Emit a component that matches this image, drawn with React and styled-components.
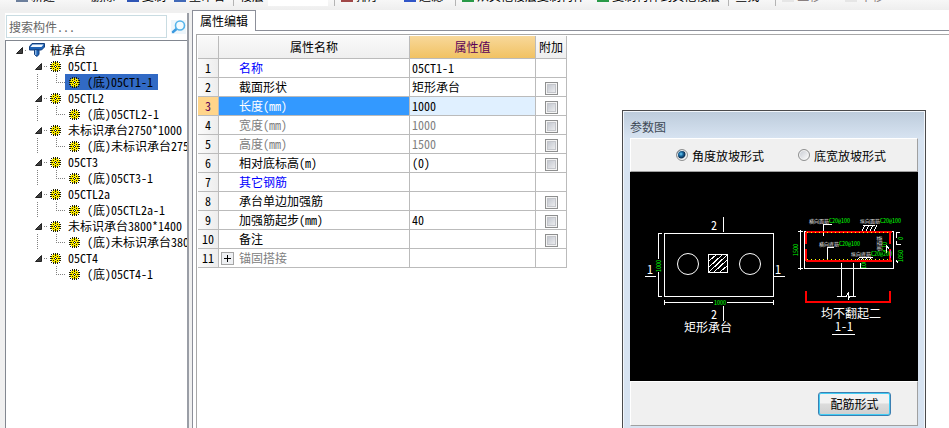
import React, { useState } from 'react';
import styled, { createGlobalStyle, css } from 'styled-components';

const GlobalStyle = createGlobalStyle`
  * {
    box-sizing: border-box;
  }
  body {
    margin: 0;
    overflow: hidden;
    background: #fff;
  }
  body, button, input, select {
    font-family: 'Noto Sans CJK SC', 'Liberation Sans', sans-serif;
    font-size: 12px;
    font-feature-settings: 'hwid';
    color: #000;
  }
`;

const Window = styled.div`
  display: flex;
  flex-direction: column;
  height: 100vh;
  overflow: hidden;
`;

/* toolbar */

const Toolbar = styled.div`
  flex: none;
  display: flex;
  align-items: flex-end;
  height: 10px;
  padding: 0 16px 4px;
  overflow: hidden;
  background: linear-gradient(#f7f7f7, #eee);
`;

const ToolButton = styled.button`
  flex: none;
  display: flex;
  align-items: center;
  gap: 3px;
  height: 20px;
  margin-right: ${(p) => p.$gap || 8}px;
  padding: 0;
  border: 0;
  background: none;
  line-height: 20px;
  white-space: nowrap;
  color: ${(p) => (p.disabled ? '#8a8080' : '#000')};
`;

const ToolIcon = styled.span`
  width: 12px;
  height: 12px;
  border: 2px solid ${(p) => p.$color};
  background: #dfe8f5;
`;

const ToolSelect = styled.select`
  flex: none;
  width: 60px;
  height: 20px;
  margin: 0 6px 0 0;
  border: 0;
  background: #fff;
`;

const Separator = styled.span`
  flex: none;
  width: 1px;
  height: 20px;
  margin-right: 6px;
  background: #b4b4b4;
`;

const Workspace = styled.div`
  flex: 1;
  display: flex;
  min-height: 0;
  background: #f0f0f0;
`;

/* component tree */

const Sidebar = styled.aside`
  flex: none;
  display: flex;
  flex-direction: column;
  width: 184px;
  margin: 3px 3px 0 5px;
  border-right: 2px solid #9a9ea6;
  background: #fff;
`;

const SearchBar = styled.div`
  display: flex;
  align-items: center;
  gap: 4px;
  height: 27px;
  padding: 0 1px;
`;

const SearchInput = styled.input`
  flex: 1;
  min-width: 0;
  height: 23px;
  padding: 0 2px;
  border: 1px solid #c9dce2;
  outline: 0;
  &::placeholder {
    color: #666;
  }
`;

const SearchButton = styled.button`
  flex: none;
  display: flex;
  padding: 0;
  border: 0;
  background: #eef6fb;
`;

const Tree = styled.div`
  flex: 1;
  padding-top: 1px;
  border-top: 1px solid #828790;
  border-left: 1px solid #828790;
  overflow: hidden;
`;

const TreeRow = styled.div`
  display: flex;
  align-items: center;
  height: 16px;
  padding-left: ${(p) => p.$indent}px;
`;

const Dots = styled.span`
  flex: none;
  width: ${(p) => p.$width}px;
  height: 1px;
  margin: 0 2px;
  background: repeating-linear-gradient(90deg, #808080 0 1px, transparent 1px 2px);
`;

const Guide = styled.span`
  flex: none;
  align-self: stretch;
  width: 19px;
  background: ${(p) => (p.$last ? 'none' : 'repeating-linear-gradient(#808080 0 1px, transparent 1px 2px) 0 0 / 1px 100% no-repeat')};
`;

const Elbow = styled.span`
  flex: none;
  align-self: flex-start;
  width: 9px;
  height: 9px;
  background:
    repeating-linear-gradient(#808080 0 1px, transparent 1px 2px) 0 0 / 1px 100% no-repeat,
    repeating-linear-gradient(90deg, #808080 0 1px, transparent 1px 2px) 0 100% / 100% 1px no-repeat;
`;

const TreeItem = styled.button`
  flex: none;
  display: flex;
  align-items: center;
  gap: ${(p) => p.$gap || 7}px;
  height: 16px;
  padding: 0;
  border: 0;
  background: none;
  line-height: 16px;
  white-space: nowrap;
  ${(p) => p.$child && css`
    padding: 0 5px 0 4px;
  `}
  ${(p) => p.$selected && css`
    background: #316ac5;
  `}
`;

/* property editor */

const Editor = styled.main`
  flex: 1;
  display: flex;
  flex-direction: column;
  min-width: 0;
  background: #fff;
`;

const TabBar = styled.div`
  display: flex;
  height: 21px;
`;

const Tab = styled.button`
  width: 64px;
  padding: 0;
  border: 1px solid #8c8f99;
  border-bottom: 0;
  background: #fff;
  line-height: 18px;
`;

const TabLine = styled.span`
  flex: 1;
  border-bottom: 1px solid #8c8f99;
`;

const TabPanel = styled.div`
  flex: 1;
  padding: 3px 0 0 3px;
  border-left: 1px solid #8c8f99;
`;

const Sheet = styled.div`
  height: 100%;
  padding: 1px 0 0 1px;
  border: 1px solid #a8a8a8;
  border-width: 1px 0 0 1px;
`;

const Table = styled.table`
  width: 369px;
  border-spacing: 0;
  table-layout: fixed;
  td, th {
    padding: 0;
    border-right: 1px solid #bbb;
    border-bottom: 1px solid #bbb;
    font-weight: normal;
    line-height: 18px;
    white-space: nowrap;
  }
`;

const Col = styled.col`
  width: ${(p) => p.$width}px;
`;

const HeadCell = styled.th`
  height: 23px;
  background: ${(p) => (p.$active ? 'linear-gradient(#f8d89a, #f1c263)' : 'linear-gradient(#fafafa, #efefef)')};
  color: ${(p) => (p.$active ? '#5a0057' : '#000')};
`;

const IndexCell = styled.th`
  height: 19px;
  background: ${(p) => (p.$active ? '#ffd58a' : 'linear-gradient(90deg, #fbfbfb, #ededed)')};
  color: ${(p) => (p.$active ? '#5a0057' : '#000')};
`;

const nameColors = { link: '#00f', muted: '#808080', active: '#fff' };

const NameCell = styled.td`
  background: ${(p) => (p.$tone === 'active' ? '#39f' : '#fff')};
  color: ${(p) => nameColors[p.$tone] || '#000'};
`;

const NameContent = styled.div`
  display: flex;
  align-items: center;
  gap: 5px;
  height: 18px;
  padding-left: ${(p) => (p.$group ? 2 : 20)}px;
`;

const ExpandButton = styled.button`
  display: flex;
  padding: 2px;
  border: 1px solid #a5a5a5;
  background: #eef0f3;
`;

const ValueCell = styled.td`
  background: ${(p) => (p.$tone === 'active' ? '#e0f0ff' : '#fff')};
  color: ${(p) => (p.$tone === 'muted' ? '#808080' : '#000')};
  && {
    padding-left: 2px;
  }
`;

const CheckCell = styled.td`
  text-align: center;
`;

const Checkbox = styled.input`
  appearance: none;
  display: block;
  width: 13px;
  height: 13px;
  margin: 2px auto 0;
  border: 1px solid #8e8f8f;
  background: linear-gradient(135deg, #b9bec8, #f6f6f6);
  box-shadow: inset 0 0 0 1px #f4f4f4, inset 0 0 0 2px #c4c6cb;
  &:checked {
    background: #316ac5;
  }
`;

/* parameter drawing dialog */

const Dialog = styled.section`
  position: absolute;
  top: 110px;
  right: 23px;
  width: 304px;
  padding: 0 6px 8px;
  border: 1px solid #4a4a4c;
  background: linear-gradient(#bccbdb, #d7e3f1 27px);
  box-shadow: inset 0 0 0 1px #f2f6fb;
`;

const DialogTitle = styled.h2`
  height: 27px;
  margin: 0 1px;
  font-size: 12px;
  font-weight: normal;
  line-height: 32px;
  color: #3e4956;
`;

const DialogPane = styled.div`
  display: flex;
  align-items: center;
  justify-content: ${(p) => p.$align || 'center'};
  gap: 34px;
  height: ${(p) => p.$height}px;
  margin: 0 1px;
  padding: 0 26px 0 40px;
  border: 1px solid #a0a0a0;
  border-color: #fff #a0a0a0 #a0a0a0 #fff;
  background: #f0f0f0;
`;

const RadioLabel = styled.label`
  display: flex;
  align-items: center;
  gap: 4px;
  white-space: nowrap;
`;

const Radio = styled.input`
  appearance: none;
  width: 12px;
  height: 12px;
  margin: 0;
  border: 1px solid #8e8f8f;
  border-radius: 50%;
  background: linear-gradient(135deg, #c5c9d0, #fff);
  box-shadow: inset 0 0 0 1px #f4f4f4;
  &:checked {
    background: radial-gradient(circle at 4px 4px, #6fd0f5 0, #1b6ba3 2px, #0b2e50 4px, #e4e8ec 5px);
  }
`;

const Drawing = styled.svg`
  display: block;
  width: calc(100% - 2px);
  margin: 0 1px;
  background: #000;
  font-size: 12px;
`;

const PrimaryButton = styled.button`
  width: 73px;
  height: 24px;
  padding: 0;
  border: 1px solid #3c7fb1;
  border-radius: 3px;
  background: linear-gradient(#f2f2f2 45%, #dcdcdc 50%, #cfcfcf);
  box-shadow: inset 0 0 0 1px #42cdf5;
  line-height: 20px;
`;

const gearPixels = [
  '...K.K.K...',
  '.K.KYKYK.K.',
  '..YYYKYYY..',
  'KKYKYYYKYKK',
  '.YYYYKYYYY.',
  'KKKYKWKYKKK',
  '.YYYYKYYYY.',
  'KKYKYYYKYKK',
  '..YYYKYYY..',
  '.K.KYKYK.K.',
  '...K.K.K...',
];

const gearColors = { K: '#222200', Y: '#ffee00', W: '#fff' };

function GearIcon() {
  return (
    <svg width="11" height="11" viewBox="0 0 11 11" shapeRendering="crispEdges" aria-hidden="true">
      {gearPixels.map((line, y) => line.split('').map((c, x) => (
        c !== '.' && <rect key={`${x}-${y}`} x={x} y={y} width="1" height="1" fill={gearColors[c]} />
      )))}
    </svg>
  );
}

function CapIcon() {
  return (
    <svg width="16" height="14" viewBox="0 0 16 14" aria-hidden="true">
      <path d="M3 .5h12.500v3.500L12.500 7H.5V3.500z" fill="#1d62b5" stroke="#123f7d" />
      <path d="M3.500 1.500h11L12.500 4H1.500z" fill="#f1f8ff" />
      <path d="M5.500 7h4.500v4.500L7.800 13.500 5.500 11.500z" fill="#1d62b5" stroke="#123f7d" />
      <path d="M6.800 7v5" stroke="#b9d8f5" />
    </svg>
  );
}

function Arrow() {
  return (
    <svg width="7" height="7" viewBox="0 0 7 7" aria-hidden="true">
      <path d="M6.500 .5v6h-6z" fill="#404040" stroke="#222" />
    </svg>
  );
}

const tree = [
  ['05CT1', '(底)05CT1-1'],
  ['05CTL2', '(底)05CTL2-1'],
  ['未标识承台2750*1000', '(底)未标识承台2750*1000-1'],
  ['05CT3', '(底)05CT3-1'],
  ['05CTL2a', '(底)05CTL2a-1'],
  ['未标识承台3800*1400', '(底)未标识承台3800*1400-1'],
  ['05CT4', '(底)05CT4-1'],
];

const properties = [
  { name: '名称', value: '05CT1-1', tone: 'link' },
  { name: '截面形状', value: '矩形承台', check: true },
  { name: '长度(mm)', value: '1000', tone: 'active', check: true },
  { name: '宽度(mm)', value: '1000', tone: 'muted', check: true },
  { name: '高度(mm)', value: '1500', tone: 'muted', check: true },
  { name: '相对底标高(m)', value: '(0)', check: true },
  { name: '其它钢筋', value: '', tone: 'link' },
  { name: '承台单边加强筋', value: '', check: true },
  { name: '加强筋起步(mm)', value: '40', check: true },
  { name: '备注', value: '', check: true },
  { name: '锚固搭接', value: '', tone: 'muted', group: true },
];

function ComponentTree() {
  const [selected, setSelected] = useState(tree[0][1]);

  return (
    <Sidebar>
      <SearchBar>
        <SearchInput type="text" aria-label="搜索构件" placeholder="搜索构件..." />
        <SearchButton type="button" aria-label="搜索">
          <svg width="15" height="14" viewBox="0 0 15 14" aria-hidden="true">
            <path d="M6 8.500L2 12" stroke="#3d9be0" strokeWidth="2.500" strokeLinecap="round" />
            <circle cx="9" cy="5.500" r="4.500" fill="#f2fbff" stroke="#55b4ea" strokeWidth="1.600" />
          </svg>
        </SearchButton>
      </SearchBar>
      <Tree>
        <TreeRow $indent={10}>
          <Arrow />
          <Dots $width={2} />
          <TreeItem type="button" $gap={5}>
            <CapIcon />
            桩承台
          </TreeItem>
        </TreeRow>
        {tree.map(([parent, child], i) => (
          <React.Fragment key={parent}>
            <TreeRow $indent={29}>
              <Arrow />
              <Dots $width={4} />
              <TreeItem type="button">
                <GearIcon />
                {parent}
              </TreeItem>
            </TreeRow>
            <TreeRow $indent={31}>
              <Guide $last={i === tree.length - 1} />
              <Elbow />
              <TreeItem type="button" $child $selected={selected === child} onClick={() => setSelected(child)}>
                <GearIcon />
                {child}
              </TreeItem>
            </TreeRow>
          </React.Fragment>
        ))}
      </Tree>
    </Sidebar>
  );
}

function PropertyTable() {
  return (
    <Table>
      <colgroup>
        <Col $width={21} />
        <Col $width={191} />
        <Col $width={126} />
        <Col $width={31} />
      </colgroup>
      <thead>
        <tr>
          <HeadCell />
          <HeadCell>属性名称</HeadCell>
          <HeadCell $active>属性值</HeadCell>
          <HeadCell>附加</HeadCell>
        </tr>
      </thead>
      <tbody>
        {properties.map((row, i) => (
          <tr key={row.name}>
            <IndexCell $active={row.tone === 'active'}>{i + 1}</IndexCell>
            <NameCell $tone={row.tone}>
              <NameContent $group={row.group}>
                {row.group && (
                  <ExpandButton type="button" aria-label="展开">
                    <svg width="7" height="7" viewBox="0 0 7 7" shapeRendering="crispEdges" aria-hidden="true">
                      <path d="M0 3.500h7M3.500 0v7" stroke="#000" />
                    </svg>
                  </ExpandButton>
                )}
                {row.name}
              </NameContent>
            </NameCell>
            <ValueCell $tone={row.tone}>{row.value}</ValueCell>
            <CheckCell>
              {row.check && <Checkbox type="checkbox" aria-label={`附加 ${row.name}`} />}
            </CheckCell>
          </tr>
        ))}
      </tbody>
    </Table>
  );
}

function RebarNote({ x, y, text, spec }) {
  return (
    <text x={x} y={y} fontSize="5" fill="#e8e8e8">
      {text}
      <tspan fill="#0f0" fontSize="6">{spec}</tspan>
    </text>
  );
}

function CapDrawing() {
  return (
    <Drawing viewBox="0 1 288 209" role="img" aria-label="矩形承台">
      {/* plan */}
      <g fill="none" stroke="#fff" shapeRendering="crispEdges">
        <rect x="34.500" y="62.500" width="109" height="63" />
        <rect x="78.500" y="83.500" width="19" height="18" />
        <path d="M79 90l7-6M79 96l13-12M79 101l18-17M84 101l13-12M90 101l7-6" />
        <path d="M28.500 62v26M28.500 101v25M28 62.500h4M28 125.500h4" />
        <path d="M34 131.500h49M97 131.500h47M34.500 129v5M143.500 129v5" />
        <path d="M93.500 46v15M93.500 135v15M15 105.500h11M144 105.500h11" />
      </g>
      <g fill="none" stroke="#fff">
        <circle cx="58" cy="93" r="10.500" />
        <circle cx="120" cy="93" r="10.500" />
      </g>
      <g fill="#fff">
        <text x="81" y="59">2</text>
        <text x="81" y="148">2</text>
        <text x="17" y="103">1</text>
        <text x="145" y="103">1</text>
        <text x="54" y="161">矩形承台</text>
      </g>
      <g fill="#0f0" fontSize="6">
        <text x="84" y="134">1000</text>
        <text transform="translate(31 101) rotate(-90)">1000</text>
        <text transform="translate(168 85) rotate(-90)">1500</text>
        <text transform="translate(236 98) rotate(-90)">100</text>
        <text transform="translate(273 91) rotate(-90)">1050</text>
        <text transform="translate(273 69) rotate(-90)">0</text>
        <text transform="translate(257 80) rotate(-90)">C10</text>
      </g>

      {/* section 1-1 */}
      <g fill="none" stroke="#fff" shapeRendering="crispEdges">
        <rect x="174.500" y="60.500" width="89" height="37" />
        <path d="M170.500 59v40M168 60.500h5M168 97.500h5" />
        <path d="M211.500 92v33M223.500 92v33M207 125.500h9l2-3v6l2-3h6M230.500 92v6" />
        <path d="M202 53.500h-8.500v11M204 76.500h-6.500v14" />
        <path d="M233 54.500h12M235 54l-4 8M239 54l-4 8M243 54l-4 8M247 54l-4 8" />
        <path d="M229 86.500h14M230 86l-4 4M234 86l-4 4M238 86l-4 4M242 86l-4 4" />
        <path d="M270 61.500h-3.500v5M266.500 70v3h4M266 89l2 3M256 74l3 4 2 7M256 74v8" />
        <path d="M202 163.500h23" />
      </g>
      <g fill="none" stroke="#f00" strokeWidth="2" shapeRendering="crispEdges">
        <path d="M176 61h86M176 90h86M176 61v12M176 78v12M260 61v12M260 78v12" />
        <path d="M176 120v11h84v-11" />
      </g>
      <g fill="none" stroke="#ff0" strokeDasharray="1 3" shapeRendering="crispEdges">
        <path d="M177 61.500h83M177 88.500h83" />
      </g>
      <path d="M260.500 79v8" stroke="#f0f" />
      <RebarNote x={179} y={52} text="横向面筋" spec="C20@100" />
      <RebarNote x={230} y={52} text="纵向面筋" spec="C20@100" />
      <RebarNote x={189} y={75} text="横向底筋" spec="C20@100" />
      <RebarNote x={221} y={85} text="纵向底筋" spec="C20@200" />
      <text transform="translate(251 80) rotate(-90)" fontSize="5" fill="#e8e8e8">侧面筋</text>
      <text x="191" y="147" fill="#fff">均不翻起二</text>
      <text x="205" y="160" fill="#fff">1-1</text>
    </Drawing>
  );
}

function ParameterDialog() {
  const [slope, setSlope] = useState('angle');

  return (
    <Dialog role="dialog" aria-labelledby="dialog-title">
      <DialogTitle id="dialog-title">参数图</DialogTitle>
      <DialogPane $height={34}>
        <RadioLabel>
          <Radio type="radio" name="slope" checked={slope === 'angle'} onChange={() => setSlope('angle')} />
          角度放坡形式
        </RadioLabel>
        <RadioLabel>
          <Radio type="radio" name="slope" checked={slope === 'width'} onChange={() => setSlope('width')} />
          底宽放坡形式
        </RadioLabel>
      </DialogPane>
      <CapDrawing />
      <DialogPane $height={45} $align="flex-end">
        <PrimaryButton type="button">配筋形式</PrimaryButton>
      </DialogPane>
    </Dialog>
  );
}

function App() {
  return (
    <Window>
      <GlobalStyle />
      <Toolbar>
        <ToolButton type="button" $gap={24}><ToolIcon $color="#6c7f9c" />新建</ToolButton>
        <ToolButton type="button" $gap={12}>×删除</ToolButton>
        <ToolButton type="button"><ToolIcon $color="#2f55b5" />复制</ToolButton>
        <ToolButton type="button"><ToolIcon $color="#4169b8" />重命名</ToolButton>
        <Separator />
        <ToolButton type="button" $gap={4}>楼层</ToolButton>
        <ToolSelect aria-label="楼层" />
        <Separator />
        <ToolButton type="button" $gap={24}><ToolIcon $color="#a04848" />排序</ToolButton>
        <ToolButton type="button" $gap={12}><ToolIcon $color="#3156c8" />过滤</ToolButton>
        <Separator />
        <ToolButton type="button" $gap={12}><ToolIcon $color="#2a9a48" />从其他楼层复制构件</ToolButton>
        <ToolButton type="button"><ToolIcon $color="#2a9a48" />复制构件到其他楼层</ToolButton>
        <Separator />
        <ToolButton type="button" $gap={16}>查找</ToolButton>
        <Separator />
        <ToolButton type="button" disabled $gap={24}><ToolIcon $color="#e6e6e6" />上移</ToolButton>
        <ToolButton type="button" disabled><ToolIcon $color="#e6e6e6" />下移</ToolButton>
      </Toolbar>
      <Workspace>
        <ComponentTree />
        <Editor>
          <TabBar role="tablist">
            <Tab type="button" role="tab" aria-selected="true">属性编辑</Tab>
            <TabLine />
          </TabBar>
          <TabPanel role="tabpanel">
            <Sheet>
              <PropertyTable />
            </Sheet>
          </TabPanel>
        </Editor>
      </Workspace>
      <ParameterDialog />
    </Window>
  );
}

export default App;
